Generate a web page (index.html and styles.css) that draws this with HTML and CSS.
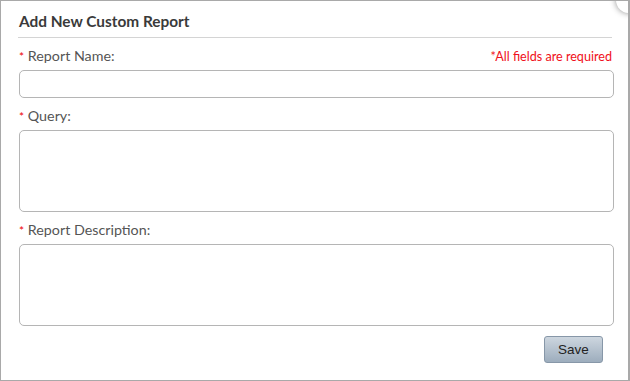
FILE: index.html
```html
<!DOCTYPE html>
<html lang="en">
<head>
    <meta charset="UTF-8">
    <title>Add New Custom Report</title>
    <link rel="stylesheet" href="styles.css">
</head>
<body>
    <div class="dialog">
        <span class="corner"></span>
        <h2 class="title">Add New Custom Report</h2>
        <div class="row">
            <label class="label"><span class="req">*</span> Report Name:</label>
            <span class="note">*All fields are required</span>
        </div>
        <input class="field" type="text">
        <div class="row">
            <label class="label"><span class="req">*</span> Query:</label>
        </div>
        <textarea class="field area"></textarea>
        <div class="row">
            <label class="label"><span class="req">*</span> Report Description:</label>
        </div>
        <textarea class="field area"></textarea>
        <div class="actions">
            <button class="save">Save</button>
        </div>
    </div>
</body>
</html>
```

FILE: styles.css
```css
html, body{
    margin: 0;
    padding: 0;
}
body{
    width: 630px;
    height: 381px;
    font-family: Lato, "Liberation Sans", sans-serif;
    background: #fff;
}
.dialog{
    position: relative;
    box-sizing: border-box;
    width: 630px;
    height: 381px;
    border: 1px solid #a9a9a9;
    border-right: 2px solid #a9a9a9;
    padding: 0 16px 0 17px;
    overflow: hidden;
}
.corner{
    position: absolute;
    top: -14px;
    right: -14px;
    width: 26px;
    height: 26px;
    border-radius: 50%;
    background: #fff;
    box-shadow: 0 0 6px rgba(0,0,0,.45);
}
.title{
    margin: 0;
    padding: 11px 0 7px 1px;
    font-size: 15.4px;
    font-weight: bold;
    color: #3a3a3a;
    border-bottom: 1px solid #d4d4d4;
}
.row{
    display: flex;
    justify-content: space-between;
    align-items: baseline;
    height: 32px;
    line-height: 36px;
}
.label{
    font-size: 14.3px;
    color: #555;
    padding-left: 1px;
}
.req{
    color: #e00;
    font-size: 12px;
}
.note{
    font-size: 12.6px;
    color: #f01020;
}
.field{
    display: block;
    box-sizing: border-box;
    width: 595px;
    height: 28px;
    margin: 0 0 0 1px;
    border: 1px solid #b5b5b5;
    border-radius: 5px;
    background: #fff;
    resize: none;
    font: inherit;
}
.area{
    height: 82px;
}
.actions{
    display: flex;
    justify-content: flex-end;
    padding: 10px 9px 0 0;
}
.save{
    width: 59px;
    height: 27px;
    border: 1px solid #8797a8;
    border-radius: 3px;
    background: linear-gradient(#cdd6df, #9dadbd);
    font-family: "Liberation Sans", Arial, sans-serif;
    font-size: 13.5px;
    color: #222;
    padding: 0;
}
```
